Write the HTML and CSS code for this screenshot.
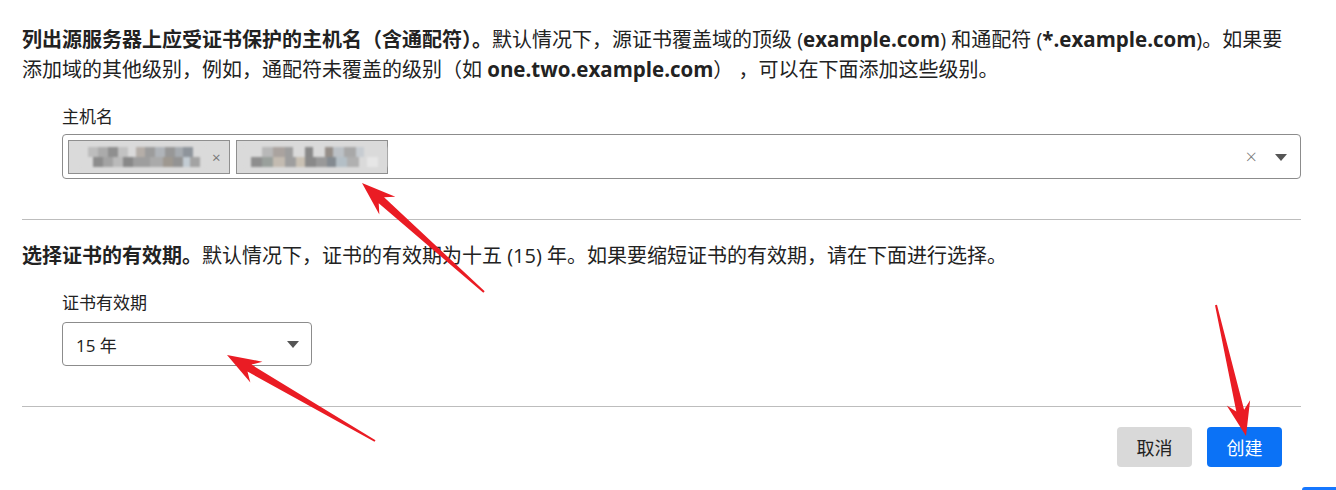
FILE: index.html
```html
<!DOCTYPE html>
<html lang="zh-CN">
<head>
<meta charset="utf-8">
<title>证书</title>
<link rel="stylesheet" href="styles.css">
</head>
<body>
<div class="page">
  <section class="sec">
    <p class="desc"><b>列出源服务器上应受证书保护的主机名（含通配符）。</b>默认情况下，源证书覆盖域的顶级 (<b class="en">example.com</b>) 和通配符 (<b class="en">*.example.com</b>)。如果要<br>添加域的其他级别，例如，通配符未覆盖的级别（如 <b class="en">one.two.example.com</b>） ，可以在下面添加这些级别。</p>
    <div class="field">
      <div class="label">主机名</div>
      <div class="multi">
        <div class="tags">
          <span class="tag t1"><span class="blur b1"></span><span class="tx">×</span></span>
          <span class="tag t2"><span class="blur b2"></span></span>
        </div>
        <div class="ctrls">
          <span class="clear">×</span>
          <span class="caret"></span>
        </div>
      </div>
    </div>
  </section>
  <hr class="div">
  <section class="sec sec2">
    <p class="desc"><b>选择证书的有效期。</b>默认情况下，证书的有效期为十五 (15) 年。如果要缩短证书的有效期，请在下面进行选择。</p>
    <div class="field">
      <div class="label">证书有效期</div>
      <div class="select"><span>15 年</span><span class="caret"></span></div>
    </div>
  </section>
  <hr class="div">
  <div class="actions">
    <button class="btn cancel">取消</button>
    <button class="btn primary">创建</button>
  </div>
</div>
<div class="fab"></div>
<svg class="marks" width="1336" height="490" viewBox="0 0 1336 490">
  <polygon fill="#ea1c24" points="484.67,291.25 384.06,197.34 395.35,196.7 362,183 379.35,214.6 378.72,203.3 483.33,292.75"/>
  <polygon fill="#ea1c24" points="375.5,440.14 251.49,364.6 262.42,361.71 227,355 250.36,382.45 247.47,371.52 374.5,441.86"/>
  <polygon fill="#ea1c24" points="1215.03,305.22 1236.3,411.55 1226.71,405.54 1246,436 1250.11,400.18 1244.1,409.77 1216.97,304.78"/>
</svg>
</body>
</html>
```
FILE: styles.css
```css
html, body { margin: 0; padding: 0; background: #fff; }
body {
  width: 1336px; height: 490px; overflow: hidden; position: relative;
  font-family: "Open Sans", "Noto Sans CJK SC", sans-serif;
  color: #222;
}
.page { padding: 25px 35px 0 22px; }
.desc { margin: 0; font-size: 20px; line-height: 30px; white-space: nowrap; }
.desc b { font-weight: 700; }
.desc .en { font-size: 20.5px; line-height: 20px; }
.field { margin-left: 40px; }
.label { margin-top: 20px; font-size: 17px; line-height: 24px; color: #222; }
.multi {
  margin-top: 5px; height: 45px; box-sizing: border-box;
  border: 1px solid #8c8c8c; border-radius: 4px;
  display: flex; align-items: flex-start; justify-content: space-between;
  padding: 5px;
}
.tags { display: flex; gap: 6px; }
.tag {
  height: 34px; box-sizing: border-box; border: 1px solid #8f8f8f; background: #dadada;
  display: flex; align-items: center; padding: 0 0 0 12px;
}
.t1 { width: 162px; }
.t2 { width: 152px; padding-left: 8px; }
.blur {
  display: block; height: 20px; filter: blur(1.3px);
  background-repeat: no-repeat;
  background-size: 100% 50%, 100% 50%;
  background-position: top left, bottom left;
}
.b1 {
  width: 124px;
  background-image:
    linear-gradient(90deg, #dadada 0 6%, #bdbdbd 6% 14%, #ababab 14% 22%, #8f8f8f 22% 30%, #c2c2c2 30% 38%, #dadada 38% 44%, #b5aea8 44% 52%, #9c9c9c 52% 60%, #b0b4b9 60% 68%, #979797 68% 76%, #a6abb0 76% 82%, #8e949b 82% 90%, #dadada 90% 100%),
    linear-gradient(90deg, #dadada 0 10%, #8c8c8c 10% 18%, #a3a3a3 18% 26%, #bababa 26% 34%, #888888 34% 42%, #9e9e9e 42% 56%, #aaaaaa 56% 66%, #9e9890 66% 74%, #939393 74% 82%, #c3ccd3 82% 88%, #a3a3a3 88% 96%, #dadada 96% 100%);
}
.b2 {
  width: 142px;
  background-image:
    linear-gradient(90deg, #dadada 0 12%, #b8b8b8 12% 20%, #aaa39f 20% 28%, #9e9e9e 28% 34%, #dadada 34% 42%, #888888 42% 48%, #dadada 48% 56%, #958e88 56% 62%, #bcc1c6 62% 70%, #a8a8a8 70% 78%, #c7ccd1 78% 84%, #dadada 84% 100%),
    linear-gradient(90deg, #dadada 0 4%, #8e8e8e 4% 12%, #9aa09c 12% 20%, #c3bbb1 20% 28%, #9e9e9e 28% 36%, #c9c1b4 36% 42%, #898989 42% 50%, #999999 50% 58%, #838a90 58% 64%, #b4bfc6 64% 72%, #b0b0b0 72% 80%, #dadada 80% 86%, #e6e6e6 86% 94%, #dadada 94% 100%);
}
.tx { color: #777; font-size: 15px; margin-left: 7px; }
.ctrls { display: flex; align-items: center; height: 34px; gap: 18px; padding-right: 8px; }
.clear { color: #777; font-size: 20px; line-height: 1; font-weight: 300; }
.caret {
  width: 0; height: 0; border-left: 6px solid transparent; border-right: 6px solid transparent;
  border-top: 7px solid #555;
}
.div { border: 0; border-top: 1px solid #bdbdbd; margin: 40px 0 0; height: 0; }
.sec2 { margin-top: 21px; }
.select {
  margin-top: 7px; width: 250px; height: 44px; box-sizing: border-box;
  border: 1px solid #8c8c8c; border-radius: 4px;
  display: flex; align-items: center; justify-content: space-between;
  padding: 0 12px 0 13px; font-size: 17px; color: #222;
}
.actions { display: flex; justify-content: flex-end; gap: 15px; padding-right: 19px; margin-top: 20px; }
.btn {
  width: 75px; height: 40px; border: 0; border-radius: 4px;
  font-family: "Open Sans", "Noto Sans CJK SC", sans-serif; font-size: 18px;
}
.cancel { background: #d9d9d9; color: #222; }
.primary { background: #0b72f6; color: #fff; }
.fab { position: absolute; left: 1302px; top: 487px; width: 50px; height: 3px; border-radius: 20px 20px 0 0; background: #1677ff; }
.marks { position: absolute; left: 0; top: 0; pointer-events: none; }
```
